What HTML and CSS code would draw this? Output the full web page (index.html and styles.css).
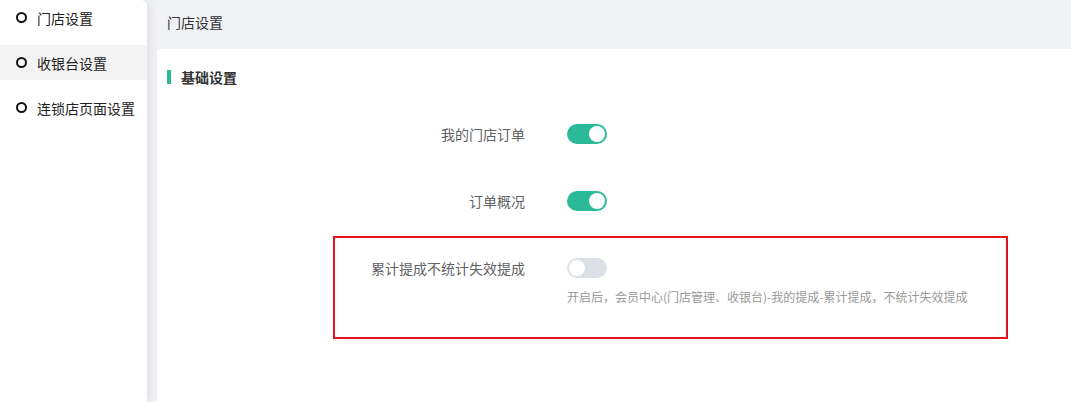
FILE: index.html
```html
<!DOCTYPE html>
<html lang="zh-CN">
<head>
<meta charset="utf-8">
<title>门店设置</title>
<link rel="stylesheet" href="styles.css">
</head>
<body>
<aside class="sidebar">
  <div class="nav-item"><span class="ring"></span><span>门店设置</span></div>
  <div class="nav-item active"><span class="ring"></span><span>收银台设置</span></div>
  <div class="nav-item"><span class="ring"></span><span>连锁店页面设置</span></div>
</aside>
<main class="main">
  <div class="page-head">门店设置</div>
  <section class="card">
    <h3 class="section-title">基础设置</h3>
    <div class="form">
      <div class="row">
        <label class="label">我的门店订单</label>
        <div class="control"><span class="switch on"><span class="knob"></span></span></div>
      </div>
      <div class="row">
        <label class="label">订单概况</label>
        <div class="control"><span class="switch on"><span class="knob"></span></span></div>
      </div>
      <div class="row">
        <label class="label">累计提成不统计失效提成</label>
        <div class="control">
          <span class="switch"><span class="knob"></span></span>
          <p class="help">开启后，会员中心(门店管理、收银台)-我的提成-累计提成，不统计失效提成</p>
        </div>
      </div>
    </div>
    <div class="highlight"></div>
  </section>
</main>
</body>
</html>
```

FILE: styles.css
```css
* { box-sizing: border-box; }
html, body { margin: 0; padding: 0; }
body {
  display: flex;
  height: 402px;
  overflow: hidden;
  background: #f0f2f5;
  font-family: "Noto Sans CJK SC", "Noto Sans", "Liberation Sans", sans-serif;
  color: #333;
}
.sidebar {
  width: 147px;
  flex: none;
  background: #fff;
  border-top-right-radius: 6px;
  box-shadow: 3px 0 8px rgba(0, 0, 0, 0.08);
  position: relative;
  z-index: 1;
}
.nav-item {
  height: 35px;
  margin-bottom: 10px;
  display: flex;
  align-items: center;
  padding-left: 16px;
  font-size: 14px;
  color: #222;
}
.nav-item.active { background: #f3f3f3; }
.ring {
  width: 11px;
  height: 11px;
  border: 2px solid #111;
  border-radius: 50%;
  margin-right: 10px;
  flex: none;
}
.main {
  flex: 1;
  display: flex;
  flex-direction: column;
  padding-left: 10px;
  min-width: 0;
}
.page-head {
  height: 49px;
  padding-left: 10px;
  padding-top: 11px;
  font-size: 14px;
  line-height: 22px;
  color: #333;
}
.card {
  flex: 1;
  background: #fff;
  border-top-left-radius: 4px;
  padding: 20px 0 0 10px;
  position: relative;
}
.section-title {
  margin: 0;
  display: flex;
  align-items: center;
  height: 14px;
  margin-top: 1px;
  font-size: 14px;
  font-weight: bold;
  color: #333;
  border-left: 4px solid #2bba98;
  padding-left: 10px;
  line-height: 14px;
}
.form { padding-top: 40px; }
.row {
  display: flex;
  align-items: flex-start;
  margin-bottom: 47px;
}
.label {
  width: 358px;
  flex: none;
  text-align: right;
  font-size: 14px;
  line-height: 20px;
  color: #606266;
}
.control { padding-left: 42px; }
.switch {
  display: block;
  width: 40px;
  height: 20px;
  border-radius: 10px;
  background: #dcdfe6;
  position: relative;
}
.switch.on { background: #2bba98; }
.knob {
  position: absolute;
  top: 2px;
  left: 2px;
  width: 16px;
  height: 16px;
  border-radius: 50%;
  background: #fff;
}
.switch.on .knob { left: 22px; }
.help {
  margin: 11px 0 0;
  font-size: 12px;
  line-height: 16px;
  color: #999;
  white-space: nowrap;
}
.highlight {
  position: absolute;
  left: 176px;
  top: 187px;
  width: 675px;
  height: 103px;
  border: 2px solid #e8141c;
  pointer-events: none;
}
```
